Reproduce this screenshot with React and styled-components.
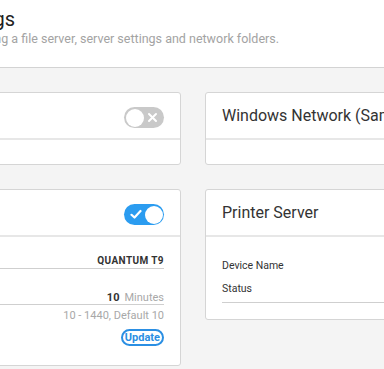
import React from "react";
import styled, { createGlobalStyle } from "styled-components";

const Global = createGlobalStyle`
  html, body { margin: 0; padding: 0; background: #f4f4f4; }
  body { width: 384px; height: 369px; overflow: hidden; font-family: Roboto, "Noto Sans", Arial, sans-serif; }
  * { box-sizing: border-box; }
`;

const Page = styled.div`
  width: 384px;
  height: 369px;
  overflow: hidden;
  background: #f4f4f4;
`;

const Header = styled.header`
  background: #fff;
  border-bottom: 1px solid #d3d3d3;
  height: 68px;
  padding-top: 7px;
`;

const Line = styled.div`
  width: ${(p) => p.$end}px;
  display: flex;
  justify-content: flex-end;
  white-space: nowrap;
`;

const PageTitle = styled.h1`
  margin: 0;
  font-size: 20px;
  line-height: 24px;
  font-weight: 400;
  color: #222;
`;

const PageSubtitle = styled.p`
  margin: 0;
  font-size: 12.5px;
  line-height: 16px;
  color: #a3a3a3;
`;

const Grid = styled.main`
  display: grid;
  grid-template-columns: 340px 340px;
  column-gap: 24px;
  row-gap: 24px;
  margin: 24px 0 0 -159px;
  align-items: start;
`;

const Card = styled.section`
  background: #fff;
  border: 1px solid #d5d5d5;
  border-radius: 3px;
  display: flex;
  flex-direction: column;
`;

const CardHeader = styled.div`
  height: 47px;
  padding: 0 16px;
  display: flex;
  align-items: center;
  justify-content: space-between;
  border-bottom: 2px solid #e7e7e7;
`;

const CardTitle = styled.h2`
  margin: 0;
  font-size: 16px;
  font-weight: 400;
  color: #333;
  white-space: nowrap;
`;

const CardBody = styled.div`
  padding: ${(p) => p.$pad || "0 16px"};
  min-height: ${(p) => p.$min || 0}px;
  display: flex;
  flex-direction: column;
`;

const Track = styled.div`
  position: relative;
  width: 40px;
  height: 21px;
  border-radius: 11px;
  background: ${(p) => (p.$on ? "#2b9cf0" : "#c9c9c9")};
  margin-top: 4px;
  flex: none;
`;

const Knob = styled.span`
  position: absolute;
  top: 1.5px;
  ${(p) => (p.$on ? "right: 1.5px;" : "left: 1.5px;")}
  width: 18px;
  height: 18px;
  border-radius: 50%;
  background: #fff;
`;

const Mark = styled.svg`
  position: absolute;
  top: 5px;
  ${(p) => (p.$on ? "left: 6px;" : "right: 6px;")}
`;

function Toggle({ on }) {
  return (
    <Track $on={on}>
      <Knob $on={on} />
      {on ? (
        <Mark $on width="12" height="11" viewBox="0 0 12 11">
          <path d="M1.5 5.8 L4.5 8.5 L10.5 2" fill="none" stroke="#fff" strokeWidth="2.2" strokeLinecap="round" strokeLinejoin="round" />
        </Mark>
      ) : (
        <Mark width="11" height="11" viewBox="0 0 11 11">
          <path d="M2 2 L9 9 M9 2 L2 9" fill="none" stroke="#fff" strokeWidth="2" strokeLinecap="round" />
        </Mark>
      )}
    </Track>
  );
}

const FieldRow = styled.div`
  display: flex;
  justify-content: space-between;
  align-items: center;
  line-height: 15px;
  height: 16px;
  border-bottom: 1px solid #cfcfcf;
  margin-top: ${(p) => p.$mt || 0}px;
  white-space: nowrap;
`;

const Label = styled.span`
  font-size: 11px;
  color: #333;
`;

const StrongValue = styled.span`
  font-size: 10px;
  font-weight: 700;
  letter-spacing: 0.4px;
  color: #333;
  text-transform: uppercase;
`;

const Amount = styled.span`
  font-size: 11px;
  font-weight: 700;
  color: #333;
`;

const Unit = styled.span`
  font-size: 11px;
  color: #a8a8a8;
  margin-left: 5px;
`;

const Hint = styled.div`
  margin-top: 4px;
  font-size: 11px;
  line-height: 14px;
  color: #a8a8a8;
  text-align: right;
`;

const Actions = styled.div`
  margin-top: 6px;
  display: flex;
  justify-content: flex-end;
`;

const PillButton = styled.button`
  height: 17px;
  padding: 0 2px;
  border: 2px solid #2b8fe3;
  border-radius: 10px;
  background: #fff;
  color: #2b8fe3;
  font-family: inherit;
  font-size: 11px;
  font-weight: 700;
  line-height: 13px;
  cursor: pointer;
`;

const InfoList = styled.ul`
  list-style: none;
  margin: 0;
  padding: 0 0 6px;
  border-bottom: 1px solid #cfcfcf;
  display: flex;
  flex-direction: column;
  gap: 9px;
`;

const InfoItem = styled.li`
  font-size: 10.5px;
  line-height: 14px;
  color: #333;
`;

export default function App() {
  return (
    <Page>
      <Global />
      <Header>
        <Line $end={15}>
          <PageTitle>File Sharing Settings</PageTitle>
        </Line>
        <Line $end={279}>
          <PageSubtitle>Configure options for using a file server, server settings and network folders.</PageSubtitle>
        </Line>
      </Header>
      <Grid>
        <Card>
          <CardHeader>
            <CardTitle>Apple Network</CardTitle>
            <Toggle on={false} />
          </CardHeader>
          <CardBody $min={24} />
        </Card>
        <Card>
          <CardHeader>
            <CardTitle>Windows Network (Samba)</CardTitle>
          </CardHeader>
          <CardBody $min={24} />
        </Card>
        <Card>
          <CardHeader>
            <CardTitle>DLNA Server</CardTitle>
            <Toggle on />
          </CardHeader>
          <CardBody $pad="16px 16px 19px">
            <FieldRow>
              <Label>Device Name</Label>
              <StrongValue>Quantum T9</StrongValue>
            </FieldRow>
            <FieldRow $mt={20}>
              <Label>Rescan Interval</Label>
              <span>
                <Amount>10</Amount>
                <Unit>Minutes</Unit>
              </span>
            </FieldRow>
            <Hint>10 - 1440, Default 10</Hint>
            <Actions>
              <PillButton>Update</PillButton>
            </Actions>
          </CardBody>
        </Card>
        <Card>
          <CardHeader>
            <CardTitle>Printer Server</CardTitle>
          </CardHeader>
          <CardBody $pad="22px 16px 16px">
            <InfoList>
              <InfoItem>Device Name</InfoItem>
              <InfoItem>Status</InfoItem>
            </InfoList>
          </CardBody>
        </Card>
      </Grid>
    </Page>
  );
}
